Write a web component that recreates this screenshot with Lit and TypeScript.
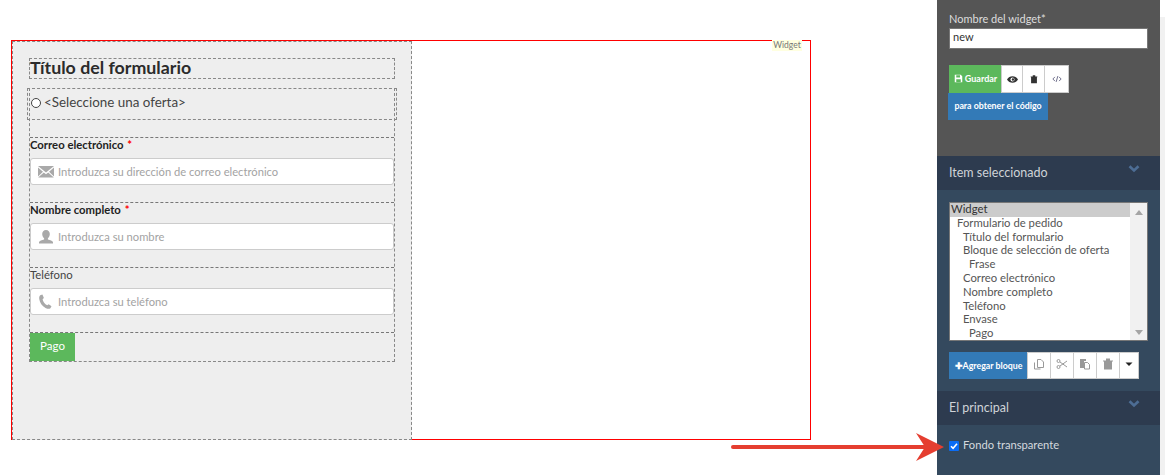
import { LitElement, html, css, svg } from "lit";
import { customElement } from "lit/decorators.js";

const chevron = html`<svg class="chev" viewBox="0 0 12 8" width="12" height="8"><path d="M1.5 1.2 L6 5.5 L10.5 1.2" fill="none" stroke="#4d6d94" stroke-width="2.6"/></svg>`;
const mail = svg`<path fill="#a9a9a9" d="M0 2h16L8 8.5zM0 3.5l5 4.2L0 12.5zM16 3.5l-5 4.2 5 4.8zM5.8 8.4 8 10.2l2.2-1.8 5.6 5.1H.2z"/>`;
const user = svg`<path fill="#a9a9a9" d="M8 1c2.4 0 3.8 1.7 3.8 4 0 1.8-.9 3.4-1.9 4.2v1.2c2.2.7 4.6 1.3 5.1 2.6v1.5H1V13c.5-1.3 2.9-1.9 5.1-2.6V9.2C5.1 8.4 4.2 6.8 4.2 5 4.200 2.700 5.600 1 8 1z"/>`;
const phone = svg`<path fill="#a9a9a9" d="M2.200 1.200 4.400.6l1.500 3.300-1.300 1.300c.3 2.300 2.300 5 4.600 6l1.500-1 2.800 2.100-1.100 2c-1 .9-2.900.7-4.900-.3C4 12.300 1.800 8.600 1.300 5.300 1 3.600 1.300 2 2.200 1.200z"/>`;

@customElement("app-root")
export class AppRoot extends LitElement {
  static styles = css`
    :host { display: block; width: 1165px; height: 475px; overflow: hidden; position: relative; background: #fff;
      font-family: Lato, "Liberation Sans", sans-serif; color: #333; }
    * { box-sizing: border-box; }
    .page { display: grid; grid-template-columns: 937px 223px 5px; height: 475px; }
    .stage { padding: 40px 0 0 11px; }
    .widget { width: 800px; height: 400px; border: 1px solid #f00; position: relative; }
    .tag { position: absolute; top: -1px; right: 8px; width: 30px; height: 11px; text-align: center; background: #ffffe0; color: #777; font-size: 8.500px; line-height: 11px; }
    .form { width: 400px; height: 399px; background: #eee; border: 1px dashed #888; padding: 16px 16px 0 16px; }
    .title { height: 21px; border: 1px dashed #888; font-size: 17.800px; font-weight: 700; line-height: 17px; color: #2b2b2b; white-space: nowrap; }
    .wrap { border: 1px dashed #888; border-top: 0; margin-top: 9px; }
    .offer { margin: 0 -3px; height: 32px; border: 1px dashed #888; display: flex; align-items: flex-start; padding: 6px 0 0 3px; font-size: 13.400px; line-height: 15px; color: #444; gap: 3px; }
    .radio { width: 10px; height: 10px; border: 1px solid #444; border-radius: 50%; background: #fff; margin-top: 3px; flex: none; }
    .block { height: 65px; border-top: 1px dashed #777; }
    .gap { height: 17px; }
    .lbl { height: 20px; font-size: 11.300px; line-height: 13px; color: #222; font-weight: 700; white-space: nowrap; }
    .lbl.plain { font-weight: 400; color: #444; }
    .req { color: #f00; margin-left: 1px; }
    .input { height: 27px; width: 364px; border: 1px solid #ccc; border-radius: 3px; background: #fff; display: flex; align-items: center; padding-left: 7px; gap: 4px; font-size: 11.200px; color: #a3a3a3; white-space: nowrap; }
    .input svg { flex: none; }
    .go { border-top: 1px dashed #777; }
    .pay { width: 45px; height: 28px; padding-bottom: 3px; background: #5cb85c; color: #fff; font-size: 11.500px; display: flex; align-items: center; justify-content: center; }
    .side { background: #34495e; display: flex; flex-direction: column; }
    .top { height: 156px; background: #555; padding: 12px 12px 0; color: #ddd; }
    .top .name { font-size: 11px; line-height: 13px; height: 16px; }
    .field { width: 199px; height: 21px; background: #fff; border: 1px solid #777; color: #333; font-size: 11px; line-height: 16px; padding-left: 3px; }
    .tools { display: flex; margin-top: 16px; height: 28px; }
    .save { width: 53px; padding-bottom: 2px; background: #5cb85c; color: #fff; font-size: 9px; font-weight: 700; display: flex; align-items: center; justify-content: center; gap: 2px; }
    .tool { background: #fff; border: 1px solid #ccc; display: flex; align-items: center; justify-content: center; margin-left: -1px; }
    .tool:first-of-type { margin-left: 0; }
    .blue { background: #337ab7; color: #fff; font-size: 8.800px; font-weight: 700; display: flex; align-items: center; justify-content: center; }
    .code { width: 100px; height: 27px; margin-left: -1px; padding-bottom: 2px; }
    .head { height: 34px; background: #2d3b4f; display: flex; align-items: center; justify-content: space-between; padding: 0 20px 2px 12px; font-size: 12.500px; color: #cfd3d8; flex: none; }
    .head .chev { margin-top: -6px; }
    .body { padding: 12px 12px 12px; height: 201px; }
    .list { width: 199px; height: 139px; border: 1px solid #777; background: #fff; display: flex; font-size: 11.300px; line-height: 12.500px; color: #555; }
    .items { flex: 1; }
    .item { height: 13.800px; white-space: nowrap; }
    .item.sel { background: #ccc; color: #333; padding-left: 1px; }
    .l1 { padding-left: 7px; } .l2 { padding-left: 13px; } .l3 { padding-left: 19px; }
    .bar { width: 17px; background: #f1f1f1; display: flex; flex-direction: column; justify-content: space-between; align-items: center; padding: 7px 0 5px; }
    .row { display: flex; height: 27px; margin-top: 11px; }
    .add { width: 79px; }
    .row .tool { width: 24px; padding-bottom: 4px; }
    .row .tool.caret { width: 20px; }
    .check { display: flex; align-items: center; gap: 4px; padding: 2px 12px 0; font-size: 11.200px; color: #d5d9de; height: 36px; }
    .box { width: 10px; height: 10px; background: #0a6cf5; border-radius: 1px; display: flex; align-items: center; justify-content: center; flex: none; margin-top: 4px; }
    .scroll { background: #fff; padding-top: 17px; }
    .thumb { height: 458px; background: #f1f1f1; }
    .arrow { position: absolute; left: 725px; top: 428px; }
  `;

  private ic(body: unknown, w = 12, h = 12) {
    return html`<svg width=${w} height=${h} viewBox="0 0 12 12">${body}</svg>`;
  }

  private field(label: string, req: boolean, icon: unknown, ph: string) {
    return html`<div class="block">
      <div class="lbl ${req ? "" : "plain"}">${label}${req ? html` <span class="req">*</span>` : ""}</div>
      <div class="input"><svg width="16" height="16" viewBox="0 0 16 16">${icon}</svg>${ph}</div>
    </div>`;
  }

  render() {
    const items: [string, string][] = [
      ["Formulario de pedido", "l1"], ["Título del formulario", "l2"], ["Bloque de selección de oferta", "l2"],
      ["Frase", "l3"], ["Correo electrónico", "l2"], ["Nombre completo", "l2"], ["Teléfono", "l2"], ["Envase", "l2"], ["Pago", "l3"],
    ];
    return html`<div class="page">
      <div class="stage">
        <div class="widget">
          <span class="tag">Widget</span>
          <div class="form">
            <div class="title">Título del formulario</div>
            <div class="wrap">
              <div class="offer"><span class="radio"></span>&lt;Seleccione una oferta&gt;</div>
              <div class="gap"></div>
              ${this.field("Correo electrónico", true, mail, "Introduzca su dirección de correo electrónico")}
              ${this.field("Nombre completo", true, user, "Introduzca su nombre")}
              ${this.field("Teléfono", false, phone, "Introduzca su teléfono")}
              <div class="go"><div class="pay">Pago</div></div>
            </div>
          </div>
        </div>
      </div>
      <div class="side">
        <div class="top">
          <div class="name">Nombre del widget*</div>
          <div class="field">new</div>
          <div class="tools">
            <div class="save">${this.ic(svg`<path fill="#fff" d="M1 1h8l2 2v8H1zM3 1.500v3h5v-3zM3 7v3.500h6V7z"/>`, 9, 9)}Guardar</div>
            <div class="tool" style="width:22px">${this.ic(svg`<path fill="#333" d="M0 6c1.500-2.500 3.500-3.500 6-3.500S10.500 3.500 12 6c-1.500 2.500-3.500 3.500-6 3.500S1.500 8.500 0 6z"/><circle cx="6" cy="6" r="2.200" fill="#fff"/><circle cx="6.500" cy="6" r="1.300" fill="#333"/>`, 11, 11)}</div>
            <div class="tool" style="width:23px">${this.ic(svg`<path fill="#333" d="M2 3h8v1H9.500v7h-7V4H2zM4.500 1.500h3V3h-3z"/>`, 10, 10)}</div>
            <div class="tool" style="width:25px">${this.ic(svg`<path fill="none" stroke="#557" stroke-width="1" d="M3.500 3.500 1 6l2.500 2.500M8.500 3.500 11 6 8.500 8.500M7 2.500 5 9.500"/>`, 10, 10)}</div>
          </div>
          <div class="blue code">para obtener el código</div>
        </div>
        <div class="head">Item seleccionado ${chevron}</div>
        <div class="body">
          <div class="list">
            <div class="items">
              <div class="item sel">Widget</div>
              ${items.map(([t, c]) => html`<div class="item ${c}">${t}</div>`)}
            </div>
            <div class="bar">
              <svg width="8" height="5" viewBox="0 0 8 5"><path d="M4 0 8 5H0z" fill="#a5a5a5"/></svg>
              <svg width="8" height="5" viewBox="0 0 8 5"><path d="M4 5 8 0H0z" fill="#a5a5a5"/></svg>
            </div>
          </div>
          <div class="row">
            <div class="blue add">✚Agregar bloque</div>
            <div class="tool">${this.ic(svg`<path fill="none" stroke="#999" d="M4.500 1.500h3.500l2.500 2.500v5.500H4.500zM1.500 4.500v6.500h6"/>`)}</div>
            <div class="tool">${this.ic(svg`<g fill="none" stroke="#999"><circle cx="2.500" cy="3" r="1.500"/><circle cx="2.500" cy="9" r="1.500"/><path d="M4 4 11 9M4 8 11 3"/></g>`)}</div>
            <div class="tool">${this.ic(svg`<path fill="#999" d="M1 1h6v2H5v7H1z"/><path fill="#fff" stroke="#999" d="M5.500 4.500h3l2 2v4.500h-5z"/>`)}</div>
            <div class="tool">${this.ic(svg`<path fill="#999" d="M1 2.500h10v1H10V11.500H2V3.500H1zM4 .5h4v2H4z"/>`)}</div>
            <div class="tool caret">${this.ic(svg`<path fill="#222" d="M2.500 4.500h7L6 8z"/>`)}</div>
          </div>
        </div>
        <div class="head">El principal ${chevron}</div>
        <div class="check"><span class="box"><svg width="8" height="8" viewBox="0 0 8 8"><path d="M1 4.200 3.100 6.300 7 1.800" fill="none" stroke="#fff" stroke-width="1.600"/></svg></span>Fondo transparente</div>
      </div>
      <div class="scroll"><div class="thumb"></div></div>
      <svg class="arrow" width="222" height="36" viewBox="725 428 222 36">
        <path d="M733 447H925" stroke="#e53e30" stroke-width="4" stroke-linecap="round" fill="none"/>
        <path d="M916 433 944 447 916 461 925 447z" fill="#e53e30"/>
      </svg>
    </div>`;
  }
}
